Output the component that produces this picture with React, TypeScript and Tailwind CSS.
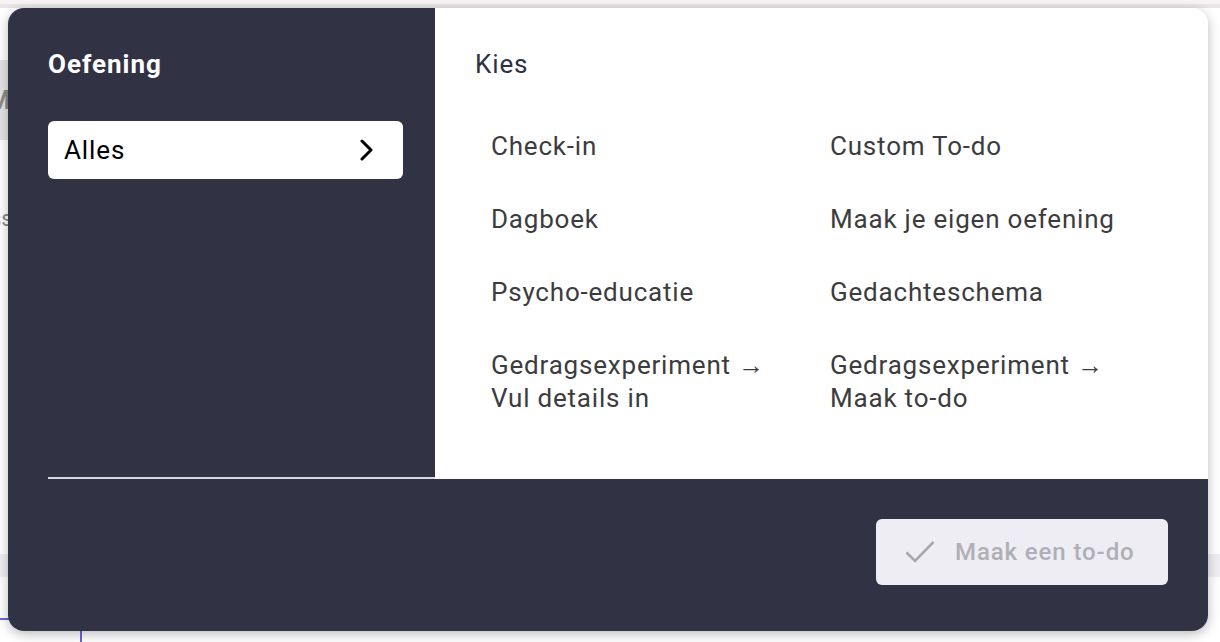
import React from 'react';

const ITEMS = [
  'Check-in',
  'Custom To-do',
  'Dagboek',
  'Maak je eigen oefening',
  'Psycho-educatie',
  'Gedachteschema',
  'Gedragsexperiment → Vul details in',
  'Gedragsexperiment → Maak to-do',
];

const Chevron = () => (
  <svg width="16" height="22" viewBox="0 0 16 22" fill="none">
    <polyline points="3,2 12,11 3,20" stroke="#000" strokeWidth="3" strokeLinecap="round" strokeLinejoin="round" />
  </svg>
);

const CheckMark = () => (
  <svg width="30" height="24" viewBox="0 0 30 24" fill="none">
    <polyline points="1.5,12.5 10,21 28.5,2" stroke="#a9a7ae" strokeWidth="2.6" />
  </svg>
);

export default function App() {
  return (
    <div className="relative h-[642px] w-[1220px] overflow-hidden bg-white font-[family-name:Roboto,sans-serif]">
      {/* page behind the dialog */}
      <div className="flex h-full flex-col">
        <div className="h-1 bg-[#f6f4f5]" />
        <div className="h-1 bg-[#e9e5e7]" />
        <div className="mt-[52px] flex h-20 w-[400px] items-center bg-[#e4e4e4] text-[26px] font-bold text-[#8a8a8a]">
          <span className="-ml-[12px]">M</span>
        </div>
        <div className="mt-[62px] -ml-[10px] text-[22px] text-[#8a8a8a]">ss</div>
        <div className="mt-[319px] h-[23px] w-full bg-[#f0eef3]" />
        <div className="mt-[41px] flex flex-1">
          <div className="w-20 border-t-2 border-[#6b63dc]" />
          <div className="w-[300px] border-l-2 border-[#6b63dc]" />
        </div>
      </div>

      {/* dialog */}
      <div className="absolute left-2 top-2 flex w-[1200px] flex-col overflow-hidden rounded-2xl shadow-[0_3px_12px_rgba(0,0,0,0.28)]">
        <div className="flex h-[471px]">
          <div className="flex w-[427px] flex-col bg-[#313345] pl-10 pt-10">
            <div className="flex flex-1 flex-col border-b-2 border-[#d8d6e0]">
              <h2 className="text-[26px] font-bold leading-8 tracking-[1px] text-white">Oefening</h2>
              <button className="mt-[41px] mr-8 flex h-[58px] items-center justify-between rounded-md bg-white pl-4 pr-[28px]">
                <span className="text-[26px] tracking-[0.9px] text-black">Alles</span>
                <Chevron />
              </button>
            </div>
          </div>

          <div className="flex-1 bg-white pl-10 pt-10">
            <h3 className="text-[26px] leading-8 tracking-[0.9px] text-[#2e3044]">Kies</h3>
            <div className="mt-[30px] grid grid-cols-[339px_339px]">
              {ITEMS.map((item) => (
                <button
                  key={item}
                  className="px-4 py-5 text-left text-[26px] leading-[33px] tracking-[0.8px] text-[#3c3c3e]"
                >
                  {item}
                </button>
              ))}
            </div>
          </div>
        </div>

        <div className="flex h-[152px] items-start justify-end bg-[#313345] pr-10 pt-10">
          <button className="flex h-[66px] w-[292px] items-center gap-5 rounded-md bg-[#eeedf3] pl-[29px]">
            <CheckMark />
            <span className="text-[24px] font-medium tracking-[0.9px] text-[#b1afb6]">Maak een to-do</span>
          </button>
        </div>
      </div>
    </div>
  );
}
